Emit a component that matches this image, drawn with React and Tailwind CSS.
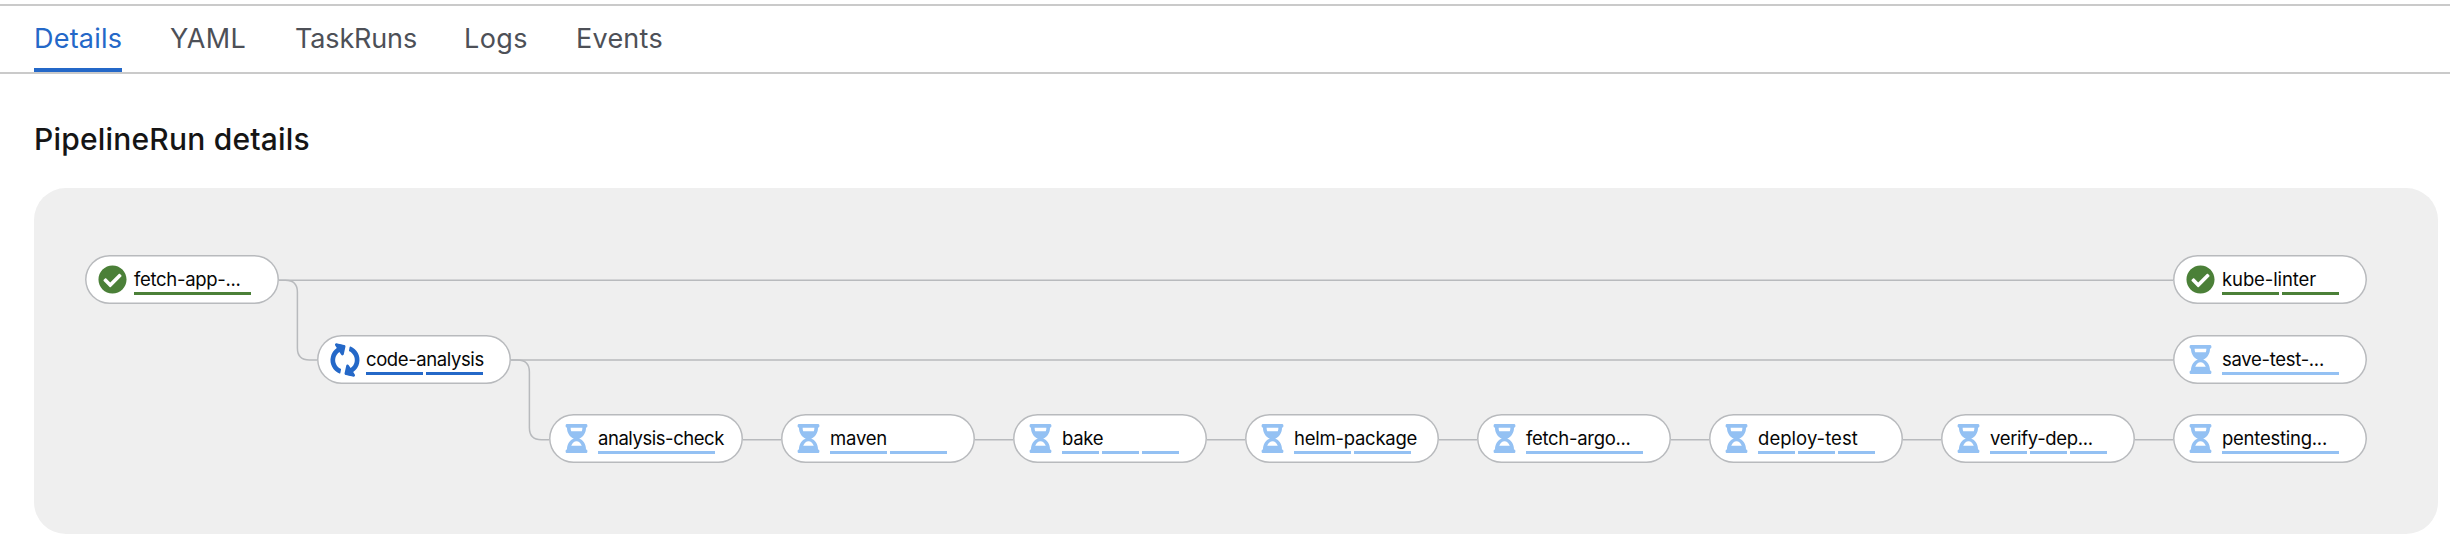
import React from "react";
import { FaCheckCircle, FaSyncAlt, FaHourglassHalf } from "react-icons/fa";

const tabs = [
  { label: "Details", className: "w-[88px] tracking-[0.2px] border-[#2468c8] text-[#2468c8]" },
  { label: "YAML", className: "w-[77px] tracking-[0.4px] border-transparent" },
  { label: "TaskRuns", className: "w-[121px] tracking-[-0.15px] border-transparent" },
  { label: "Logs", className: "w-[64px] tracking-[0.4px] border-transparent" },
  { label: "Events", className: "w-[88px] tracking-[0.25px] border-transparent" },
];

const columnX = (col) => 51 + col * 232;
const ROW_Y = [67, 147, 226];

const nodes = [
  { label: "fetch-app-...", col: 0, row: 0, status: "done", steps: 1, tracking: "tracking-[-0.3px]" },
  { label: "kube-linter", col: 9, row: 0, status: "done", steps: 2, tracking: "tracking-[-0.1px]" },
  { label: "code-analysis", col: 1, row: 1, status: "running", steps: 2, tracking: "tracking-[-0.4px]" },
  { label: "save-test-...", col: 9, row: 1, status: "pending", steps: 1, tracking: "tracking-[-0.3px]" },
  { label: "analysis-check", col: 2, row: 2, status: "pending", steps: 1, tracking: "tracking-[-0.45px]" },
  { label: "maven", col: 3, row: 2, status: "pending", steps: 2, tracking: "tracking-[-0.2px]" },
  { label: "bake", col: 4, row: 2, status: "pending", steps: 3, tracking: "tracking-[-0.3px]" },
  { label: "helm-package", col: 5, row: 2, status: "pending", steps: 2, tracking: "tracking-[-0.25px]" },
  { label: "fetch-argo...", col: 6, row: 2, status: "pending", steps: 1, tracking: "tracking-[-0.3px]" },
  { label: "deploy-test", col: 7, row: 2, status: "pending", steps: 3, tracking: "tracking-[0.05px]" },
  { label: "verify-dep...", col: 8, row: 2, status: "pending", steps: 3, tracking: "tracking-[-0.32px]" },
  { label: "pentesting...", col: 9, row: 2, status: "pending", steps: 1, tracking: "tracking-[-0.25px]" },
];

const barColor = {
  done: "bg-[#4b8038]",
  running: "bg-[#2468c8]",
  pending: "bg-[#94c1f3]",
};

function StatusIcon({ status }) {
  if (status === "done") return <FaCheckCircle className="size-[29px] shrink-0 text-[#4b8038]" />;
  if (status === "running") return <FaSyncAlt className="size-[30px] shrink-0 rotate-[-78deg] text-[#2468c8]" />;
  return <FaHourglassHalf className="size-[29px] shrink-0 text-[#94c1f3]" />;
}

function Node({ label, col, row, status, steps, tracking }) {
  return (
    <div
      className="absolute flex h-[49px] w-[194px] items-center gap-[7px] rounded-full bg-white pl-[13px] shadow-[inset_0_0_0_1.5px_#b8babd]"
      style={{ left: columnX(col), top: ROW_Y[row] }}
    >
      <div className="flex w-[29px] shrink-0 justify-center">
        <StatusIcon status={status} />
      </div>
      <div className="flex flex-col gap-px self-start pt-3">
        <span className={"h-6 text-[18.5px] leading-6 whitespace-nowrap text-[#060606] " + tracking}>{label}</span>
        <div className="flex w-[117px] gap-[3px]">
          {Array.from({ length: steps }, (_, i) => (
            <span key={i} className={"h-[3px] flex-1 " + barColor[status]} />
          ))}
        </div>
      </div>
    </div>
  );
}

function Edges() {
  return (
    <svg
      className="absolute inset-0 h-full w-full"
      viewBox="0 0 2404 346"
      fill="none"
      stroke="#b8babd"
      strokeWidth="1.5"
    >
      <path d="M244 92.3H2140" />
      <path d="M244 92.3H251.4Q263.4 92.3 263.4 104.3V160Q263.4 172 275.4 172H284" />
      <path d="M476 172H2140" />
      <path d="M476 172H483.4Q495.4 172 495.4 184V239.8Q495.4 251.8 507.4 251.8H516" />
      <path d="M708 251.8H2140" />
    </svg>
  );
}

export default function App() {
  return (
    <div className="h-[544px] w-[2450px] overflow-hidden bg-white pt-1 font-['Inter',sans-serif]">
      <nav className="flex h-[70px] gap-12 border-y-2 border-[#cacaca] pl-[34px] text-[27px] text-[#4d5057]">
        {tabs.map((t) => (
          <span key={t.label} className={"border-b-4 pt-[13px] whitespace-nowrap " + t.className}>
            {t.label}
          </span>
        ))}
      </nav>
      <h2 className="h-[114px] pt-[43px] pl-[34px] text-[30px] font-medium tracking-[0.2px] text-[#151515]">
        PipelineRun details
      </h2>
      <div className="relative ml-[34px] h-[346px] w-[2404px] rounded-[32px] bg-[#efefef]">
        <Edges />
        {nodes.map((n) => (
          <Node key={n.label} {...n} />
        ))}
      </div>
    </div>
  );
}
